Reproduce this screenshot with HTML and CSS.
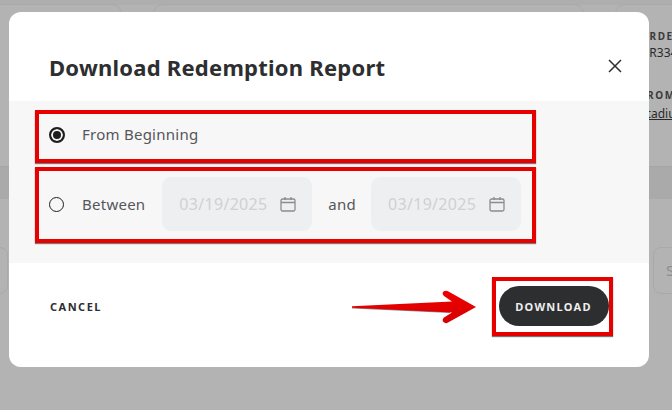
FILE: index.html
```html
<!DOCTYPE html>
<html lang="en">
<head>
    <meta charset="UTF-8">
    <title>Download Redemption Report</title>
    <link rel="stylesheet" href="styles.css">
</head>
<body>
    <div class="page">
        <div class="top-cards">
            <div class="card card-a"></div>
            <div class="card card-b"></div>
            <div class="card card-c">
                <div class="meta-label">ORDER</div>
                <div class="meta-value">OR334</div>
                <div class="meta-label meta-gap">FROM</div>
                <div class="meta-link">Stadium</div>
            </div>
        </div>
        <div class="band"></div>
        <div class="search-row">
            <div class="search-left"></div>
            <div class="search-right">S</div>
        </div>
    </div>

    <div class="modal">
        <div class="modal-head">
            <h1>Download Redemption Report</h1>
            <button class="close" aria-label="Close">
                <svg width="14" height="14" viewBox="0 0 14 14"><path d="M1 1 13 13M13 1 1 13" fill="none" stroke="#2d2e30" stroke-width="1.5"/></svg>
            </button>
        </div>
        <div class="modal-body">
            <div class="option option-first">
                <span class="radio radio-on"></span>
                <span class="label">From Beginning</span>
            </div>
            <div class="option option-second">
                <span class="radio"></span>
                <span class="label">Between</span>
                <div class="date">
                    <span>03/19/2025</span>
                    <svg width="16" height="16" viewBox="0 0 16 16"><path d="M2.5 3h11a1.500 1.500 0 0 1 1.500 1.500v9a1.500 1.500 0 0 1-1.500 1.500h-11a1.500 1.500 0 0 1-1.500-1.500v-9a1.500 1.500 0 0 1 1.500-1.500ZM1 6.500h14M5 1v3M11 1v3" fill="none" stroke="#8b8c8e" stroke-width="1.300"/></svg>
                </div>
                <span class="label and">and</span>
                <div class="date">
                    <span>03/19/2025</span>
                    <svg width="16" height="16" viewBox="0 0 16 16"><path d="M2.5 3h11a1.500 1.500 0 0 1 1.500 1.500v9a1.500 1.500 0 0 1-1.500 1.500h-11a1.500 1.500 0 0 1-1.500-1.500v-9a1.500 1.500 0 0 1 1.500-1.500ZM1 6.500h14M5 1v3M11 1v3" fill="none" stroke="#8b8c8e" stroke-width="1.300"/></svg>
                </div>
            </div>
        </div>
        <div class="modal-foot">
            <button class="cancel">CANCEL</button>
            <svg class="arrow" width="130" height="40" viewBox="0 -1 130 40">
                <defs>
                    <linearGradient id="red" x1="0" y1="0" x2="0" y2="1">
                        <stop offset="0" stop-color="#f00000"/>
                        <stop offset="1" stop-color="#d40000"/>
                    </linearGradient>
                </defs>
                <path d="M2 20.500 100 21 100 26 2 21.500Z" fill="#8a8a8a"/>
                <path d="M2 19.200 102 14.500 94 9Q91.500 6.500 93.500 4.500 95.500 3 98 4.200L126 20 98 35.500Q95.500 37 93.500 35 91.500 33 94 30.500L102 25.500 2 20.800Z" fill="url(#red)"/>
            </svg>
            <div class="download-box">
                <button class="download">DOWNLOAD</button>
            </div>
        </div>
    </div>
</body>
</html>
```

FILE: styles.css
```css
*{
    margin: 0px;
    padding: 0px;
    box-sizing: border-box;
}
body{
    width: 672px;
    height: 410px;
    overflow: hidden;
    background: #b3b3b3;
    font-family: "Noto Sans", Roboto, sans-serif;
    color: #2d2e30;
}
button{
    font-family: inherit;
    border: none;
    background: none;
}

/* page behind the dialog */
.page{
    height: 410px;
    overflow: hidden;
    background: linear-gradient(#aeaeae 0, #aeaeae 5px, #b3b3b3 5px);
}
.top-cards{
    display: flex;
    gap: 31px;
    height: 166px;
    overflow: hidden;
    padding-top: 4px;
    margin-left: -20px;
}
.card{
    flex-shrink: 0;
    border: 1px solid #a9a9a9;
    border-radius: 10px;
    height: 190px;
}
.card-a{
    width: 142px;
}
.card-b{
    width: 431px;
}
.card-c{
    width: 120px;
    padding: 24px 0 0 24px;
    white-space: nowrap;
    overflow: hidden;
}
.meta-label{
    font-size: 10px;
    font-weight: 700;
    letter-spacing: 1.6px;
    line-height: 14px;
    color: #3a3a3a;
}
.meta-gap{
    margin-top: 25px;
}
.meta-value, .meta-link{
    font-size: 12px;
    line-height: 20px;
    color: #2a2a2a;
}
.meta-link{
    margin-top: 2px;
    text-decoration: underline;
}
.band{
    height: 33px;
    background: #aaaaaa;
    border-top: 1px solid #a6a6a6;
}
.search-row{
    display: flex;
    justify-content: space-between;
    padding: 48px 0 0 0;
}
.search-left{
    width: 20px;
    height: 47px;
    margin-left: -12px;
    border: 1px solid #a9a9a9;
    border-radius: 8px;
}
.search-right{
    width: 40px;
    height: 47px;
    margin-right: -21px;
    padding: 12px 0 0 12px;
    border: 1px solid #a9a9a9;
    border-radius: 8px;
    font-size: 15px;
    color: #8d8d8d;
}

/* dialog */
.modal{
    position: absolute;
    left: 9px;
    top: 12px;
    width: 640px;
    height: 355px;
    background: white;
    border-radius: 12px;
    overflow: hidden;
}
.modal-head{
    display: flex;
    justify-content: space-between;
    align-items: center;
    height: 89px;
    padding: 22px 27px 0 40px;
}
h1{
    font-size: 22px;
    font-weight: 700;
    letter-spacing: 0.24px;
    margin-top: -1px;
}
.close{
    display: flex;
    margin-top: -3px;
}
.modal-body{
    height: 162px;
    background: #f7f7f8;
    padding: 9px 0 0 26px;
}
.option{
    display: flex;
    align-items: center;
    width: 501px;
    border: 4px solid #e60000;
    box-shadow: 0 1px 1px #777;
    padding-left: 10px;
}
.option-first{
    height: 53px;
    margin-bottom: 4px;
    padding-bottom: 3px;
}
.option-second{
    height: 76px;
    padding-bottom: 2px;
}
.radio{
    width: 15px;
    height: 15px;
    border: 1.5px solid #1f1f1f;
    border-radius: 50%;
    margin-right: 18px;
    flex-shrink: 0;
}
.radio-on{
    border-width: 2px;
    background: #1f1f1f;
    box-shadow: inset 0 0 0 2px #f7f7f8;
    width: 16px;
    height: 16px;
    margin-right: 17px;
}
.label{
    font-size: 15px;
    letter-spacing: 0.25px;
    color: #55565a;
    margin-top: -1px;
}
.option-first .label{
    margin-top: -3px;
}
.and{
    margin-left: 16px;
    margin-right: 15px;
}
.date{
    display: flex;
    align-items: center;
    justify-content: space-between;
    width: 150px;
    height: 54px;
    margin-left: 17px;
    padding: 0 16px 0 17px;
    border-radius: 9px;
    background: #eeeff1;
    font-size: 16px;
    letter-spacing: 0.3px;
    color: #d0d1d3;
}
.date + .and + .date{
    margin-left: 0;
}
.modal-foot{
    display: flex;
    align-items: center;
    height: 104px;
    padding: 0 0 18px 41px;
}
.cancel{
    font-size: 11px;
    font-weight: 700;
    letter-spacing: 1.5px;
    color: #2d2e30;
    margin-right: 248px;
}
.arrow{
    flex-shrink: 0;
    margin-right: 12px;
}
.download-box{
    flex-shrink: 0;
    display: flex;
    align-items: center;
    justify-content: center;
    width: 121px;
    height: 59px;
    padding-left: 2px;
    border: 4px solid #e60000;
    box-shadow: 0 1px 1px #777;
}
.download{
    width: 110px;
    height: 40px;
    border-radius: 20px;
    background: #2d2e30;
    color: #eee;
    font-size: 11px;
    font-weight: 700;
    letter-spacing: 1.3px;
}
```
